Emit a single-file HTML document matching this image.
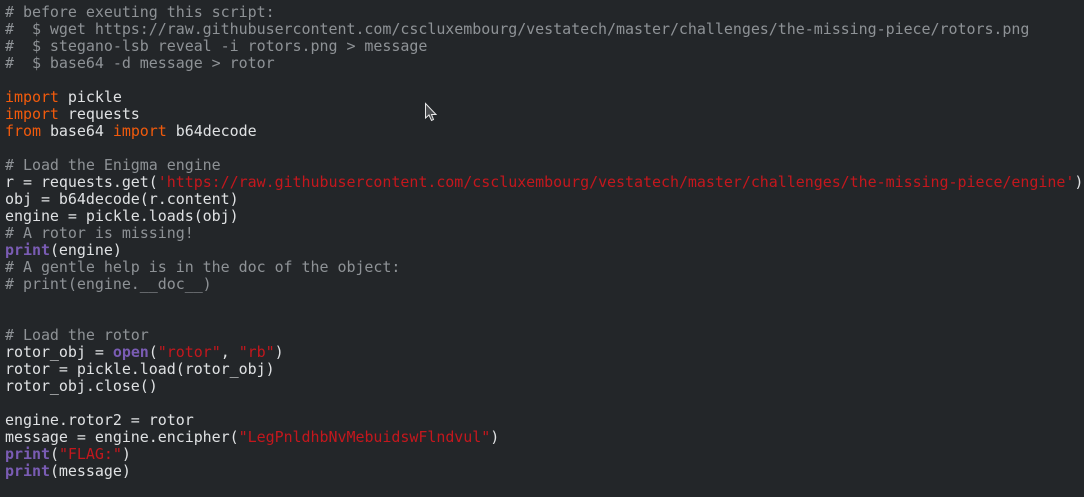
<!DOCTYPE html>
<html><head><meta charset="utf-8"><style>
html,body{margin:0;padding:0;background:#232629;width:1084px;height:497px;overflow:hidden}
pre{margin:0;padding:4px 0 0 5px;font-family:"DejaVu Sans Mono","Liberation Mono",monospace;font-size:15px;letter-spacing:-0.045px;line-height:17px;color:#dfe1e3;white-space:pre}
.c{color:#8e9296}.k{color:#f15a0c}.p{color:#7a5cb4;font-weight:bold}.s{color:#c4171d}
</style></head><body>
<pre><span class="c"># before exeuting this script:
#  $ wget https://raw.githubusercontent.com/cscluxembourg/vestatech/master/challenges/the-missing-piece/rotors.png
#  $ stegano-lsb reveal -i rotors.png &gt; message
#  $ base64 -d message &gt; rotor</span>

<span class="k">import</span> pickle
<span class="k">import</span> requests
<span class="k">from</span> base64 <span class="k">import</span> b64decode

<span class="c"># Load the Enigma engine</span>
r = requests.get(<span class="s">'https://raw.githubusercontent.com/cscluxembourg/vestatech/master/challenges/the-missing-piece/engine'</span>)
obj = b64decode(r.content)
engine = pickle.loads(obj)
<span class="c"># A rotor is missing!</span>
<span class="p">print</span>(engine)
<span class="c"># A gentle help is in the doc of the object:
# print(engine.__doc__)</span>


<span class="c"># Load the rotor</span>
rotor_obj = <span class="p">open</span>(<span class="s">"rotor"</span>, <span class="s">"rb"</span>)
rotor = pickle.load(rotor_obj)
rotor_obj.close()

engine.rotor2 = rotor
message = engine.encipher(<span class="s">"LegPnldhbNvMebuidswFlndvul"</span>)
<span class="p">print</span>(<span class="s">"FLAG:"</span>)
<span class="p">print</span>(message)</pre>
<svg style="position:absolute;left:424px;top:102px" width="16" height="22" viewBox="0 0 16 22"><path d="M1.5 1.5 L1.5 16 L5 13 L7.5 18.5 L9.5 17.5 L7.5 12.5 L12 12.5 Z" fill="#4a4c4f" stroke="#e8e8e8" stroke-width="1"/></svg>
</body></html>
